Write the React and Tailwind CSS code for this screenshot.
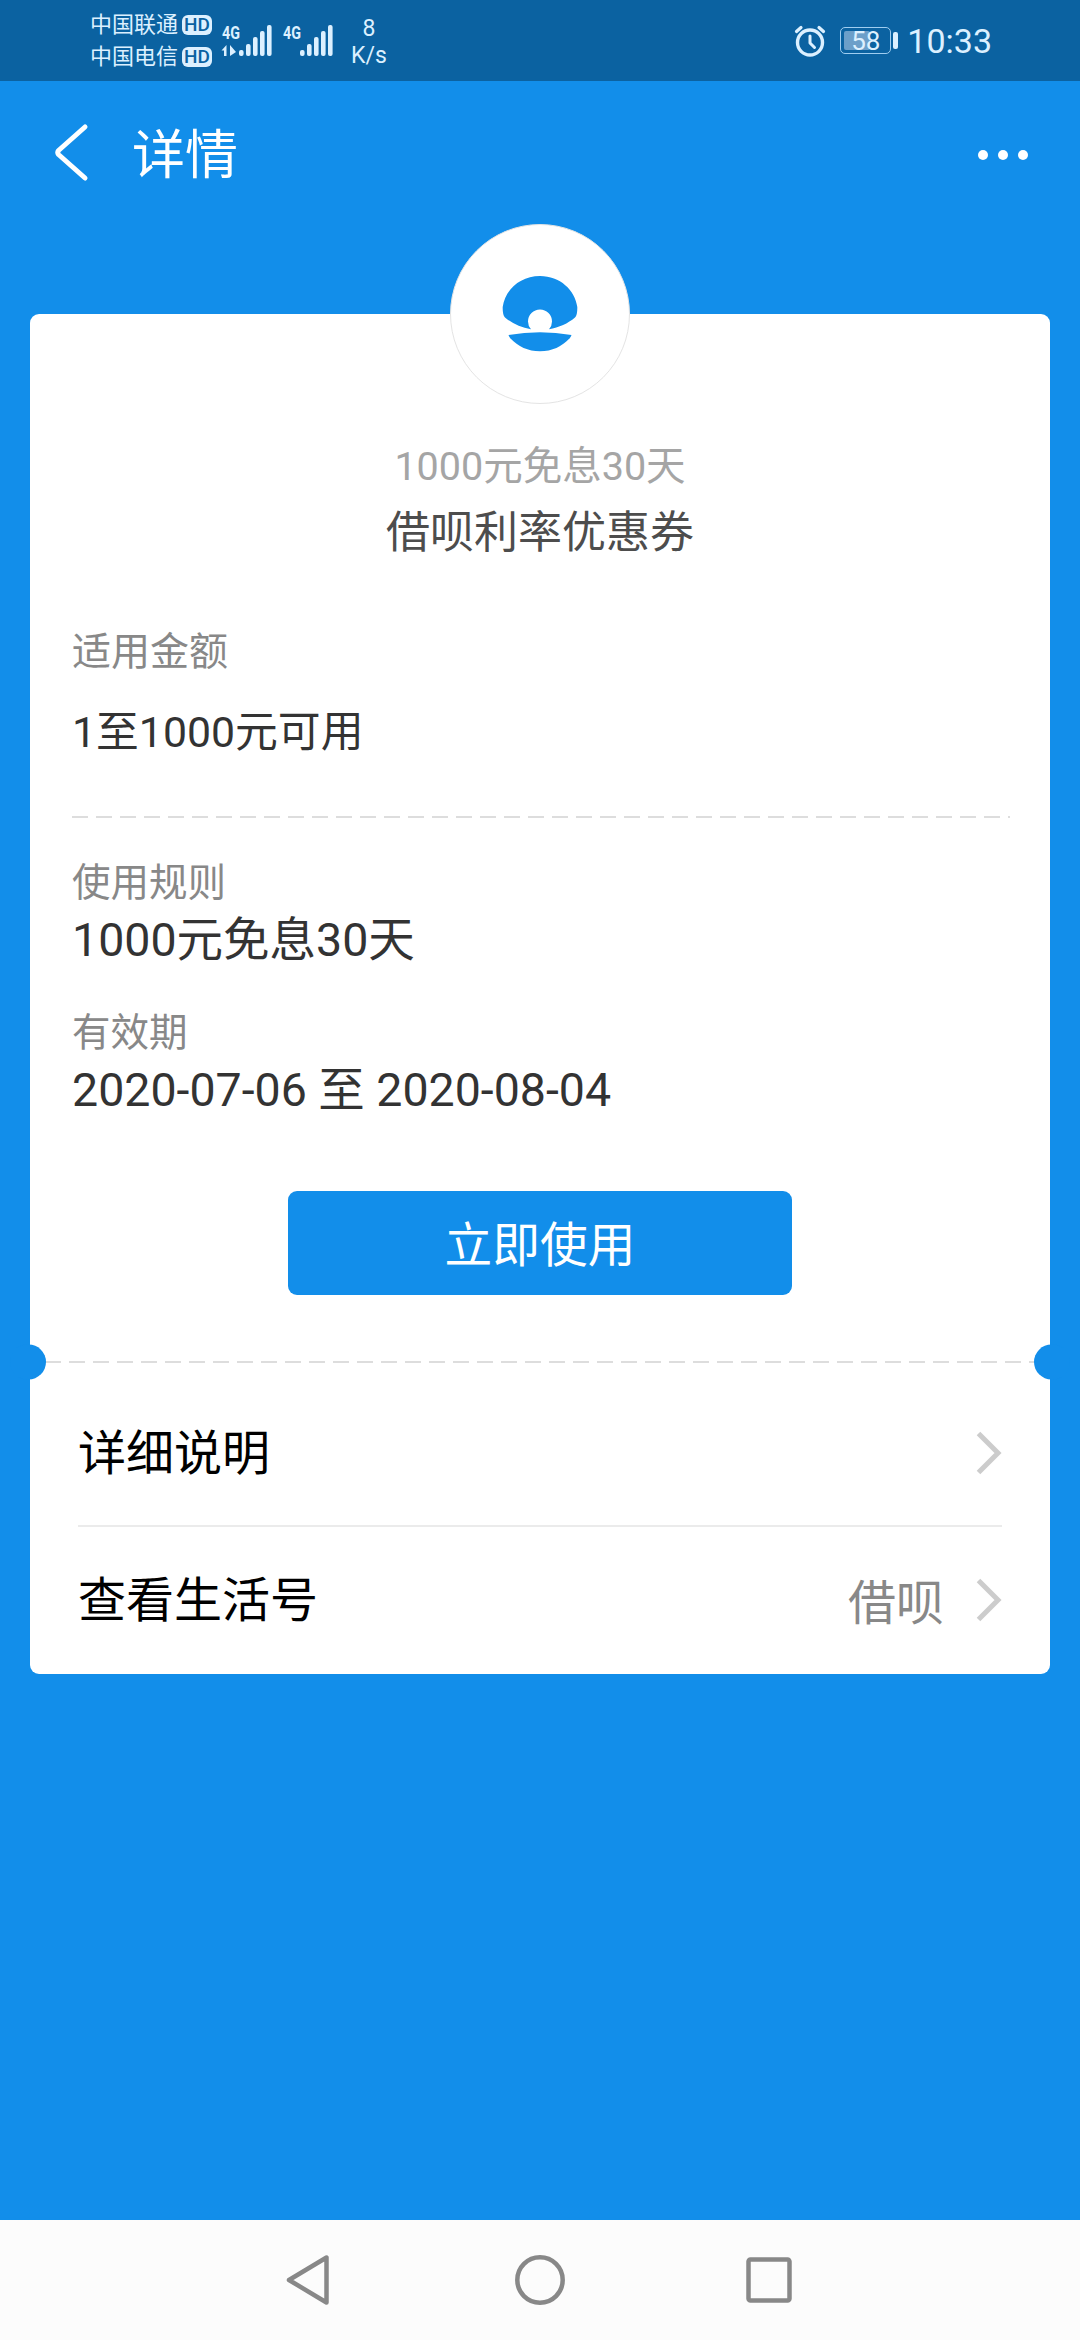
import clsx from "clsx";

const SIGNAL_BARS = [
  { x: 0, h: 6 },
  { x: 7, h: 12 },
  { x: 14, h: 19 },
  { x: 21, h: 25 },
  { x: 28, h: 31 },
];

const DETAIL_ROWS = [
  { label: "详细说明", value: null },
  { label: "查看生活号", value: "借呗" },
];

function HdBadge() {
  return (
    <span className="flex h-5 w-[30px] items-center justify-center rounded-[6px] bg-[#dcf0ff] text-[19px] leading-none font-medium text-[#0b62a1]">
      HD
    </span>
  );
}

function Carrier({ name }) {
  return (
    <div className="flex h-8 items-center gap-1">
      <span className="text-[22px] leading-8">{name}</span>
      <HdBadge />
    </div>
  );
}

function Signal({ data }) {
  return (
    <svg width="52" height="50" viewBox="0 -8 52 50" fill="currentColor">
      <text x="1" y="14.5" fontSize="18" fontWeight="700" textLength="18" lengthAdjust="spacingAndGlyphs">
        4G
      </text>
      {data ? <path d="M0.500 26.500 5.500 21v11H3v-5.500zM9 21l6 7-6 4z" /> : null}
      {SIGNAL_BARS.map((bar) => (
        <rect key={bar.x} x={bar.x + 18} y={32 - bar.h} width="4.600" height={bar.h} rx="2" />
      ))}
    </svg>
  );
}

function AlarmIcon() {
  return (
    <svg width="32" height="34" viewBox="0 0 32 34" fill="none" stroke="currentColor" strokeLinecap="round">
      <circle cx="16" cy="18.500" r="12.500" strokeWidth="3.400" />
      <path d="M16 12v7l4.500 4.500" strokeWidth="3" strokeLinejoin="round" />
      <path d="M2.500 7.500 7 3.500M29.500 7.500 25 3.500" strokeWidth="3.200" />
    </svg>
  );
}

function Battery({ level }) {
  return (
    <div className="flex items-center gap-[2px]">
      <div className="relative flex h-[27px] w-[51px] items-center justify-center rounded-[5px] border-[1.500px] border-[#9fcdf0] text-[26px] leading-none">
        <div className="absolute inset-y-[3px] left-[3px] w-[26px] rounded-[2px] bg-[#6c9fc9]" />
        <span className="relative">{level}</span>
      </div>
      <div className="h-[17px] w-[5px] rounded-[2px] bg-[#dcf0ff]" />
    </div>
  );
}

function StatusBar() {
  return (
    <div className="flex h-[81px] items-center justify-between bg-[#0b62a1] pr-[88px] pl-[90px] text-[#dcf0ff]">
      <div className="flex items-center">
        <div className="flex flex-col">
          <Carrier name="中国联通" />
          <Carrier name="中国电信" />
        </div>
        <div className="ml-[9px] flex gap-[9px]">
          <Signal data />
          <Signal />
        </div>
        <div className="ml-[17px] flex w-[36px] flex-col items-center pt-[3px] text-[23px] leading-[27px]">
          <span>8</span>
          <span>K/s</span>
        </div>
      </div>
      <div className="flex items-center">
        <AlarmIcon />
        <div className="ml-[14px]">
          <Battery level={58} />
        </div>
        <span className="ml-[9px] text-[34px] leading-none">10:33</span>
      </div>
    </div>
  );
}

function Header() {
  return (
    <div className="flex h-[143px] items-center px-[52px] text-white">
      <svg width="38" height="60" viewBox="0 0 38 60" fill="none" stroke="currentColor" strokeWidth="5" strokeLinecap="round" strokeLinejoin="round">
        <path d="M33 4 6.500 27.500Q5 29.500 6.500 31.500L33 55" />
      </svg>
      <h1 className="ml-[42px] pt-[6px] text-[53px] leading-[60px]">详情</h1>
      <div className="ml-auto flex gap-[10px] pt-1">
        <i className="size-[10px] rounded-full bg-white" />
        <i className="size-[10px] rounded-full bg-white" />
        <i className="size-[10px] rounded-full bg-white" />
      </div>
    </div>
  );
}

function ShellLogo() {
  return (
    <div className="relative size-[180px] rounded-full border border-[#e4e4e4] bg-white">
      <svg className="absolute -top-px -left-px" width="180" height="180" viewBox="0 0 180 180" fill="#128eea">
        <path d="M81 105.300C71 103.500 62 99.500 55 93.500Q52.500 91 52.700 83C55 66 70 52 90 52S125 66 127.300 83Q127.500 91 125 93.500C118 99.500 109 103.500 99 105.300Q102 102 102 97.500A12 12 0 0 0 78 97.500Q78 102 81 105.300Z" />
        <path d="M58.500 111Q90 105.500 121.500 111Q121 112.500 119.500 114.500C112 122.500 102 127.300 90 127.300S68 122.500 60.500 114.500Q59 112.500 58.500 111Z" />
      </svg>
    </div>
  );
}

function Dashes({ className }) {
  return (
    <div
      className={clsx(
        "h-[2px] bg-[repeating-linear-gradient(90deg,#dddddd_0_16px,transparent_16px_24px)]",
        className
      )}
    />
  );
}

function Notch({ className }) {
  return <div className={clsx("absolute top-1/2 h-[35px] w-[36px] -translate-y-1/2 rounded-full bg-[#128eea]", className)} />;
}

function Chevron() {
  return (
    <svg width="26" height="44" viewBox="0 0 26 44" fill="none" stroke="#cccccc" strokeWidth="5">
      <path d="M2.500 2.500 22 22 2.500 41.500" />
    </svg>
  );
}

function Coupon() {
  return (
    <div className="mx-[30px] flex h-[1360px] flex-col rounded-[9px] bg-white">
      <div className="flex flex-col items-center pt-[125px]">
        <p className="text-[39.500px] leading-[56px] text-[#a5a5a5]">1000元免息30天</p>
        <p className="mt-2 text-[44px] leading-[60px] text-[#4d4d4d]">借呗利率优惠券</p>
      </div>

      <div className="mt-[62px] px-[42px] text-[#333333]">
        <p className="text-[39px] leading-[54px] text-[#888888]">适用金额</p>
        <p className="mt-[25px] text-[42.800px] leading-[56px]">1至1000元可用</p>
        <Dashes className="mt-[56px] w-[938px]" />

        <p className="mt-[38px] text-[38.500px] leading-[54px] text-[#888888]">使用规则</p>
        <p className="text-[46.500px] leading-[60px]">1000元免息30天</p>
        <p className="mt-[36px] text-[38.500px] leading-[54px] text-[#888888]">有效期</p>
        <p className="text-[46.500px] leading-[60px]">2020-07-06 至 2020-08-04</p>
      </div>

      <button
        type="button"
        className="mx-auto mt-[71px] h-[104px] w-[504px] rounded-[9px] bg-[#128eea] pt-[5px] text-[47.700px] leading-[60px] text-white"
      >
        立即使用
      </button>

      <div className="relative mt-[49px] flex h-[35px] items-center">
        <Dashes className="mr-[15px] ml-[15px] flex-1" />
        <Notch className="-left-5" />
        <Notch className="-right-5" />
      </div>

      <div className="mx-[48px]">
        {DETAIL_ROWS.map((row, i) => (
          <div
            key={row.label}
            className={clsx("flex items-center justify-between", i > 0 ? "h-[148px] border-t-2 border-[#ebebeb]" : "h-[146px] pt-[2px]")}
          >
            <span className="pt-[2px] text-[48px] leading-[60px] text-black">{row.label}</span>
            <div className="flex items-center gap-[32px]">
              {row.value ? <span className="pt-[7px] text-[48px] leading-[60px] text-[#888888]">{row.value}</span> : null}
              <Chevron />
            </div>
          </div>
        ))}
      </div>
    </div>
  );
}

function NavBar() {
  return (
    <div className="mt-auto flex h-[120px] items-center justify-center gap-[178px] bg-[#fcfcfc]">
      <svg width="52" height="52" viewBox="0 0 52 52" fill="none" stroke="#888888" strokeWidth="4.500" strokeLinejoin="round">
        <path d="M42.500 3.500v45L5 26Z" />
      </svg>
      <svg width="52" height="52" viewBox="0 0 52 52" fill="none" stroke="#888888" strokeWidth="4.500">
        <circle cx="26" cy="26" r="22.700" />
      </svg>
      <svg width="52" height="52" viewBox="0 0 52 52" fill="none" stroke="#888888" strokeWidth="4.500">
        <rect x="4.500" y="5.500" width="41" height="41" rx="2" />
      </svg>
    </div>
  );
}

export default function App() {
  return (
    <div className="flex h-[2340px] w-[1080px] flex-col overflow-hidden bg-[#128eea] font-[Roboto,'Noto_Sans_CJK_SC',sans-serif]">
      <StatusBar />
      <Header />
      <div className="relative z-10 -mb-[90px] flex justify-center">
        <ShellLogo />
      </div>
      <Coupon />
      <NavBar />
    </div>
  );
}
